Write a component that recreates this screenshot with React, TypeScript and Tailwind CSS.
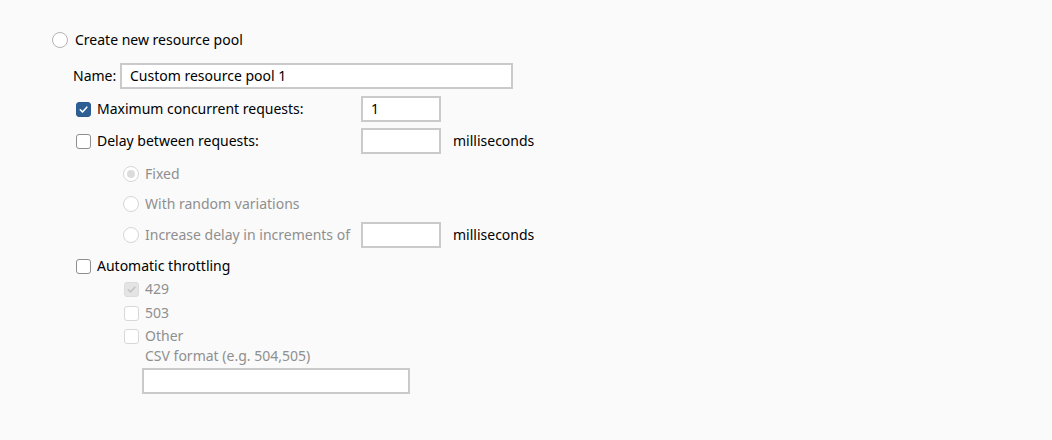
import React from "react";

const font = { fontFamily: '"Noto Sans", "Open Sans", sans-serif' };

// Round radio button, optionally selected/disabled
const Radio = ({ checked = false, disabled = false }: { checked?: boolean; disabled?: boolean }) => (
  <span
    className={`flex h-[16px] w-[16px] shrink-0 items-center justify-center rounded-full border bg-white ${
      disabled ? "border-[#d6d6d6]" : "border-[#b4b4b4]"
    }`}
  >
    {checked && <span className="h-[8px] w-[8px] rounded-full bg-[#dcdcdc]" />}
  </span>
);

const Check = ({ checked = false, disabled = false }: { checked?: boolean; disabled?: boolean }) => {
  let cls = "border-[#8e8e8e] bg-white";
  if (checked && !disabled) cls = "border-[#2a5a8f] bg-[#2d5f95]";
  else if (checked && disabled) cls = "border-[#dcdcdc] bg-[#e4e4e4]";
  else if (disabled) cls = "border-[#d8d8d8] bg-white";
  return (
    <span className={`flex h-[15px] w-[15px] shrink-0 items-center justify-center rounded-[3px] border ${cls}`}>
      {checked && (
        <svg width="11" height="11" viewBox="0 0 11 11" fill="none">
          <path
            d="M2.3 5.8 L4.5 8 L8.8 3.2"
            stroke={disabled ? "#c2c2c2" : "#ffffff"}
            strokeWidth="1.6"
            strokeLinecap="round"
            strokeLinejoin="round"
          />
        </svg>
      )}
    </span>
  );
};

const Box = ({ value = "", className = "" }: { value?: string; className?: string }) => (
  <div
    className={`flex h-[26px] items-center border-2 border-[#cacaca] bg-white px-[8px] text-[14px] text-black ${className}`}
  >
    {value}
  </div>
);

export default function App() {
  return (
    <div className="h-[440px] w-[1052px] bg-[#fafafa] text-[14px] leading-none text-black" style={font}>
      <div className="flex flex-col pt-[28px]">
        <div className="ml-[52px] flex h-[24px] items-center gap-[7px]">
          <Radio />
          <span>Create new resource pool</span>
        </div>

        <div className="ml-[73px] mt-[11px] flex h-[26px] items-center">
          <span className="w-[47px]">Name:</span>
          <Box value="Custom resource pool 1" className="w-[393px]" />
        </div>

        <div className="ml-[76px] mt-[7px] flex h-[26px] items-center">
          <Check checked />
          <span className="ml-[6px] w-[264px]">Maximum concurrent requests:</span>
          <Box value="1" className="w-[80px]" />
        </div>

        <div className="ml-[76px] mt-[6px] flex h-[26px] items-center">
          <Check />
          <span className="ml-[6px] w-[264px]">Delay between requests:</span>
          <Box className="w-[80px]" />
          <span className="ml-[12px]">milliseconds</span>
        </div>

        <div className="ml-[123px] mt-[8px] flex h-[24px] items-center gap-[6px] text-[#8f8f8f]">
          <Radio checked disabled />
          <span>Fixed</span>
        </div>

        <div className="ml-[123px] mt-[6px] flex h-[24px] items-center gap-[6px] text-[#8f8f8f]">
          <Radio disabled />
          <span>With random variations</span>
        </div>

        <div className="ml-[123px] mt-[6px] flex h-[26px] items-center">
          <Radio disabled />
          <span className="ml-[6px] w-[216px] text-[#8f8f8f]">Increase delay in increments of</span>
          <Box className="w-[80px]" />
          <span className="ml-[12px]">milliseconds</span>
        </div>

        <div className="ml-[76px] mt-[6px] flex h-[24px] items-center gap-[6px]">
          <Check />
          <span>Automatic throttling</span>
        </div>

        <div className="ml-[124px] flex flex-col text-[#8f8f8f]">
          <div className="flex h-[22px] items-center gap-[6px]">
            <Check checked disabled />
            <span>429</span>
          </div>
          <div className="mt-[2px] flex h-[22px] items-center gap-[6px]">
            <Check disabled />
            <span>503</span>
          </div>
          <div className="mt-[1px] flex h-[22px] items-center gap-[6px]">
            <Check disabled />
            <span>Other</span>
          </div>
          <div className="ml-[21px] flex h-[18px] items-center">CSV format (e.g. 504,505)</div>
          <Box className="ml-[18px] mt-[3px] w-[268px]" />
        </div>
      </div>
    </div>
  );
}
